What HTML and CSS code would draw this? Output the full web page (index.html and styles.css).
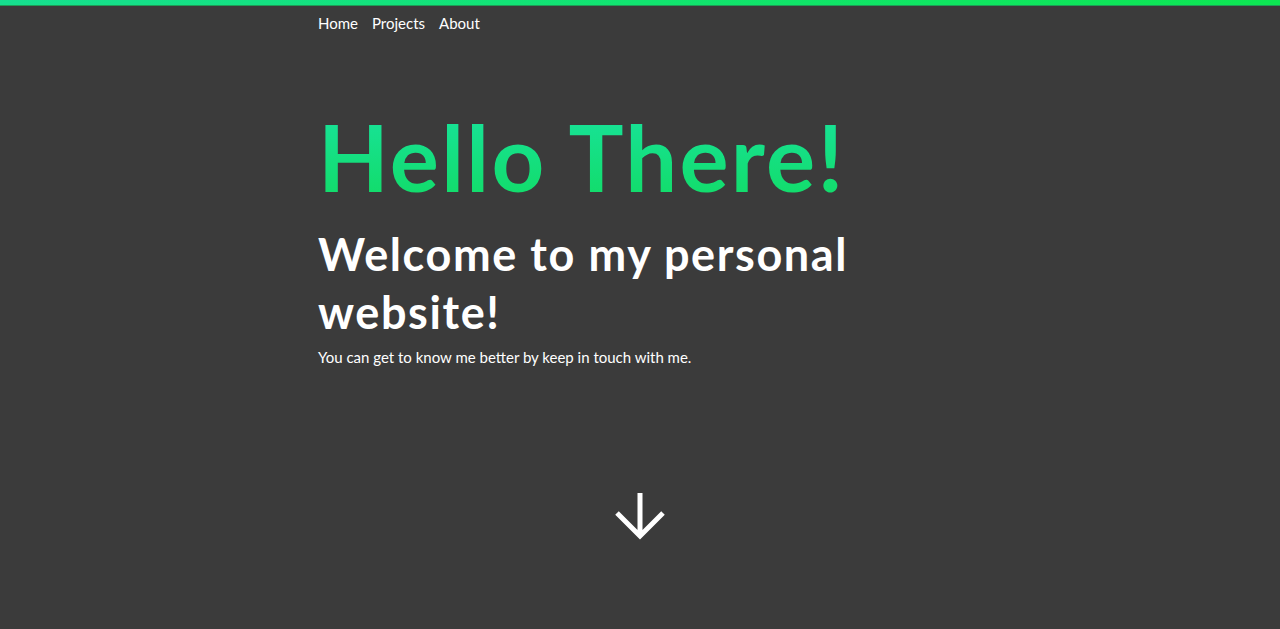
FILE: index.html
```html
<!DOCTYPE html>
<html lang="en">
<head>
<meta charset="utf-8">
<title>Personal website</title>
<link rel="stylesheet" href="styles.css">
</head>
<body>
<div class="topbar"></div>
<div class="page">
  <nav class="nav">
    <a href="#" class="nav-link">Home</a>
    <a href="#" class="nav-link">Projects</a>
    <a href="#" class="nav-link">About</a>
  </nav>
  <section class="hero">
    <h1 class="hello">Hello There!</h1>
    <h2 class="welcome">Welcome to my personal website!</h2>
    <p class="intro">You can get to know me better by keep in touch with me.</p>
  </section>
</div>
<div class="arrow-wrap">
  <svg class="arrow" width="52" height="54" viewBox="0 0 52 54" aria-hidden="true">
    <path d="M26 5 V48 M3 25 L26 48 L49 25" fill="none" stroke="#ffffff" stroke-width="5" stroke-linecap="butt" stroke-linejoin="miter"/>
  </svg>
</div>
</body>
</html>
```
FILE: styles.css
```css
html, body {
  margin: 0;
  padding: 0;
}
body {
  background: #3b3b3b;
  color: #ffffff;
  font-family: "Lato", "Noto Sans", sans-serif;
  min-height: 629px;
}
.topbar {
  height: 5px;
  background: linear-gradient(90deg, #16df8f 0%, #11e470 50%, #0de652 100%);
  border-bottom: 1px solid #1e9d57;
}
.page {
  width: 644px;
  margin: 0 auto;
}
.nav {
  display: flex;
  gap: 14px;
  padding-top: 7px;
  height: 20px;
}
.nav-link {
  color: #ffffff;
  text-decoration: none;
  font-size: 15px;
  line-height: 20px;
}
.hero {
  padding-top: 74px;
}
.hello {
  margin: 0;
  font-size: 92px;
  font-weight: 700;
  line-height: 100px;
  letter-spacing: 2.3px;
  background: linear-gradient(180deg, #17e294 15%, #12dc6a 90%);
  -webkit-background-clip: text;
  background-clip: text;
  color: transparent;
  display: inline-block;
  vertical-align: top;
}
.welcome {
  margin: 18px 0 0;
  font-size: 45px;
  font-weight: 700;
  line-height: 58px;
  letter-spacing: 1.6px;
  width: 560px;
}
.intro {
  margin: 7px 0 0;
  font-size: 15px;
  line-height: 18px;
}
.arrow-wrap {
  display: flex;
  justify-content: center;
  padding-top: 122px;
}
.arrow {
  display: block;
}
```
